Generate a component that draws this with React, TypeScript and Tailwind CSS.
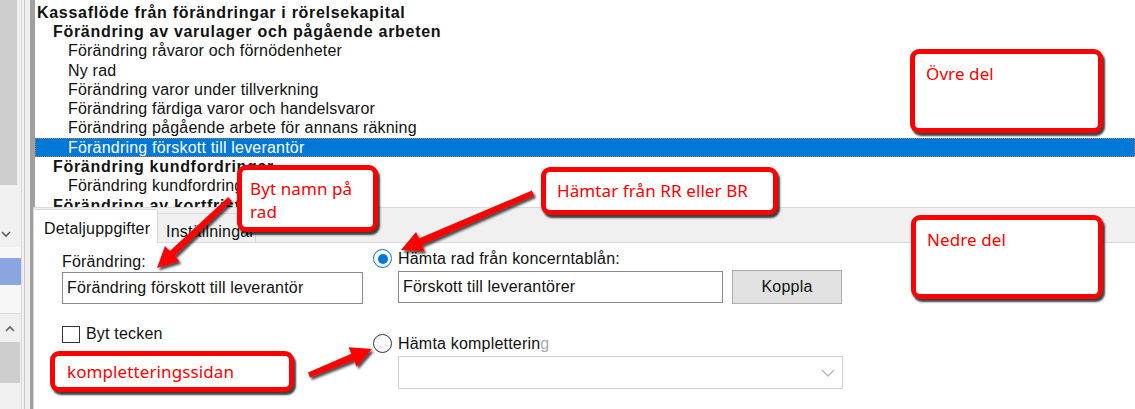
const rows = [
  { t: "Kassaflöde från förändringar i rörelsekapital", l: 0, b: true },
  { t: "Förändring av varulager och pågående arbeten", l: 1, b: true },
  { t: "Förändring råvaror och förnödenheter", l: 2 },
  { t: "Ny rad", l: 2 },
  { t: "Förändring varor under tillverkning", l: 2 },
  { t: "Förändring färdiga varor och handelsvaror", l: 2 },
  { t: "Förändring pågående arbete för annans räkning", l: 2 },
  { t: "Förändring förskott till leverantör", l: 2, sel: true },
  { t: "Förändring kundfordringar", l: 1, b: true },
  { t: "Förändring kundfordringar", l: 2 },
  { t: "Förändring av kortfristiga fordringar", l: 1, b: true },
];

const indent = ["pl-[2px]", "pl-[18px]", "pl-[33px]"];

// polygon for a thick arrow from tail to tip
function arrow(x1: number, y1: number, x2: number, y2: number, sw = 7, hw = 21, hl = 21) {
  const dx = x2 - x1;
  const dy = y2 - y1;
  const len = Math.hypot(dx, dy);
  const ux = dx / len;
  const uy = dy / len;
  const px = -uy;
  const py = ux;
  const bx = x2 - ux * hl;
  const by = y2 - uy * hl;
  const pts = [
    [x1 + (px * sw) / 2.6, y1 + (py * sw) / 2.6],
    [bx + (px * sw) / 2, by + (py * sw) / 2],
    [bx + (px * hw) / 2, by + (py * hw) / 2],
    [x2, y2],
    [bx - (px * hw) / 2, by - (py * hw) / 2],
    [bx - (px * sw) / 2, by - (py * sw) / 2],
    [x1 - (px * sw) / 2.6, y1 - (py * sw) / 2.6],
  ];
  return pts.map((p) => p.map((n) => n.toFixed(1)).join(",")).join(" ");
}

function Callout({ className, children }: { className: string; children: React.ReactNode }) {
  return (
    <div
      className={`absolute rounded-[9px] border-[5px] border-[#ff0000] bg-white text-[17px] leading-[23px] tracking-[0.1px] text-[#ff0000] shadow-[2px_3px_2px_rgba(0,0,0,0.75)] ${className}`}
      style={{ fontFamily: '"Noto Sans", "Open Sans", sans-serif' }}
    >
      {children}
    </div>
  );
}

function Radio({ checked }: { checked?: boolean }) {
  return checked ? (
    <span className="flex h-[19px] w-[19px] shrink-0 items-center justify-center rounded-full border-[1.5px] border-[#0078d7] bg-white">
      <span className="h-[10px] w-[10px] rounded-full bg-[#0078d7]" />
    </span>
  ) : (
    <span className="h-[19px] w-[19px] shrink-0 rounded-full border-[1.5px] border-[#333333] bg-white" />
  );
}

export default function App() {
  return (
    <div
      className="relative flex h-[409px] w-[1135px] overflow-hidden bg-white text-[16px] tracking-[0.2px] text-[#111]"
      style={{ fontFamily: '"Liberation Sans", Arial, sans-serif' }}
    >
      {/* left neighbour panel and splitter */}
      <div className="flex w-[21px] flex-col bg-[#f0f0f0]">
        <div className="flex h-[185px]">
          <div className="w-[17px] bg-[#cdcdcd]" />
        </div>
        <div className="flex h-[62px] items-end pb-[9px] pl-[1px]">
          <svg width="10" height="7" viewBox="0 0 10 7">
            <polyline points="1,1 5,5 9,1" fill="none" stroke="#606060" strokeWidth="1.6" />
          </svg>
        </div>
        <div className="h-[11px] bg-[#f7f7f7]" />
        <div className="h-[27px] w-[25px] bg-[#8ba5e0]" />
        <div className="h-[29px] border-b border-[#dcdcdc] bg-[#f7f7f7]" />
        <div className="flex h-[28px] items-center pl-[5px]">
          <svg width="10" height="7" viewBox="0 0 10 7">
            <polyline points="1,6 5,2 9,6" fill="none" stroke="#606060" strokeWidth="1.6" />
          </svg>
        </div>
        <div className="h-[41px] w-[20px] bg-[#cdcdcd]" />
      </div>
      <div className="w-[1px] bg-[#dadada]" />
      <div className="w-[2px] bg-[#f0f0f0]" />
      <div className="w-[1px] bg-[#c8c8c8]" />
      <div className="w-[5px] bg-[#f0f0f0]" />
      <div className="w-[3px] bg-[#a0a0a0]" />

      {/* main */}
      <div className="flex flex-1 flex-col">
        {/* tree */}
        <div className="h-[207px] overflow-hidden border-l-2 border-[#a0a0a0] pt-[3px]">
          {rows.map((r, i) => (
            <div
              key={i}
              className={`flex h-[19.3px] items-center whitespace-nowrap ${indent[r.l]} ${
                r.b ? "font-bold tracking-[0.7px]" : ""
              } ${r.sel ? "bg-[#0078d7] text-white outline-1 -outline-offset-1 outline-dotted outline-[#b08050]" : ""}`}
            >
              {r.t}
            </div>
          ))}
        </div>

        {/* bottom pane */}
        <div className="flex flex-1 flex-col border-l border-[#d4d4d4]">
          <div className="flex h-[36px] items-end border-t border-[#dadada] bg-[#f0f0f0]">
            <div className="-ml-px flex h-[34px] w-[125px] items-start border-x border-t border-[#d9d9d9] bg-white pl-[10px] pt-[7px]">
              Detaljuppgifter
            </div>
            <div className="flex h-[30px] w-[98px] items-start overflow-hidden whitespace-nowrap border-r border-t border-b border-[#d9d9d9] bg-[#f0f0f0] pl-[8px] pt-[6px]">
              Inställningar
            </div>
            <div className="h-px flex-1 bg-[#d9d9d9]" />
          </div>

          <div className="flex gap-[10px] pl-[28px]">
            <div className="flex w-[301px] flex-col">
              <div className="mt-[10px] h-[18px] leading-[18px]">Förändring:</div>
              <div className="mt-[1px] flex h-[32px] items-center border border-[#8a8a8a] pl-[4px]">
                Förändring förskott till leverantör
              </div>
              <div className="mt-[18px] flex items-center gap-[6px]">
                <span className="h-[17px] w-[18px] border border-[#333333] bg-white" />
                <span>Byt tecken</span>
              </div>
            </div>

            <div className="flex w-[470px] flex-col">
              <div className="mt-[6px] flex h-[19px] items-center gap-[6px]">
                <Radio checked />
                <span>Hämta rad från koncerntablån:</span>
              </div>
              <div className="mt-[3px] flex gap-[9px] pl-[25px]">
                <div className="flex h-[32px] w-[325px] items-center border border-[#8a8a8a] pl-[4px]">
                  Förskott till leverantörer
                </div>
                <div className="-mt-px flex h-[34px] w-[110px] items-center justify-center border border-[#adadad] bg-[#e1e1e1]">
                  Koppla
                </div>
              </div>
              <div className="mt-[30px] flex h-[19px] items-center gap-[6px]">
                <Radio />
                <span>
                  Hämta kompletterin<span className="text-[#aaaaaa]">g</span>
                </span>
              </div>
              <div className="ml-[25px] mt-[3px] flex h-[33px] w-[445px] items-center justify-end border border-[#d0d0d0] pr-[7px]">
                <svg width="14" height="8" viewBox="0 0 14 8">
                  <polyline points="1,1 7,7 13,1" fill="none" stroke="#b4b4b4" strokeWidth="1.3" />
                </svg>
              </div>
            </div>
          </div>
        </div>
      </div>

      {/* annotations */}
      <svg className="pointer-events-none absolute left-0 top-0" width="1135" height="409">
        <defs>
          <filter id="sh" x="-20%" y="-20%" width="140%" height="140%">
            <feDropShadow dx="2" dy="2.5" stdDeviation="1.2" floodColor="#000" floodOpacity="0.7" />
          </filter>
        </defs>
        <g fill="#ff0000" filter="url(#sh)">
          <polygon points={arrow(230, 199, 157, 268)} />
          <polygon points={arrow(533, 193, 401, 250)} />
          <polygon points={arrow(309, 375, 372, 349)} />
        </g>
      </svg>

      <Callout className="left-[910px] top-[49px] h-[84px] w-[193px] pl-[11px] pt-[8px]">Övre del</Callout>
      <Callout className="left-[911px] top-[215px] h-[84px] w-[192px] pl-[11px] pt-[8px]">Nedre del</Callout>
      <Callout className="left-[237px] top-[165px] h-[67px] w-[141px] pl-[8px] pt-[7px]">
        Byt namn på
        <br />
        rad
      </Callout>
      <Callout className="left-[541px] top-[167px] h-[48px] w-[237px] pl-[11px] pt-[7px]">
        Hämtar från RR eller BR
      </Callout>
      <Callout className="left-[50px] top-[351px] h-[41px] w-[244px] pl-[12px] pt-[4px]">kompletteringssidan</Callout>
    </div>
  );
}
